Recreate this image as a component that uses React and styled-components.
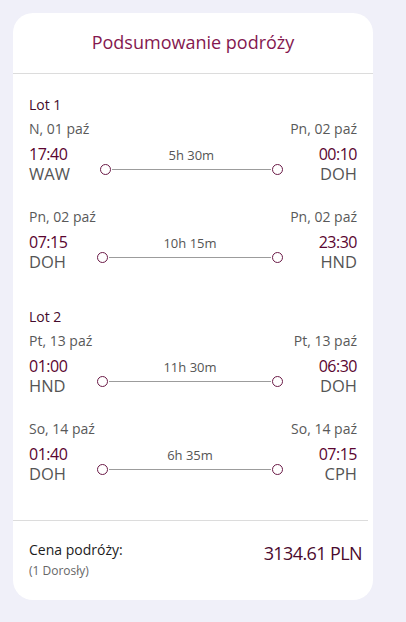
import React from 'react';
import styled, { createGlobalStyle } from 'styled-components';

const trips = [
    {
        title: 'Lot 1',
        legs: [
            { fromDate: 'N, 01 paź', toDate: 'Pn, 02 paź', dep: '17:40', arr: '00:10', from: 'WAW', to: 'DOH', time: '5h 30m' },
            { fromDate: 'Pn, 02 paź', toDate: 'Pn, 02 paź', dep: '07:15', arr: '23:30', from: 'DOH', to: 'HND', time: '10h 15m' },
        ],
    },
    {
        title: 'Lot 2',
        legs: [
            { fromDate: 'Pt, 13 paź', toDate: 'Pt, 13 paź', dep: '01:00', arr: '06:30', from: 'HND', to: 'DOH', time: '11h 30m' },
            { fromDate: 'So, 14 paź', toDate: 'So, 14 paź', dep: '01:40', arr: '07:15', from: 'DOH', to: 'CPH', time: '6h 35m' },
        ],
    },
];

const App = () => {
    return (
        <Page>
            <GlobalStyle />
            <Card>
                <Header>
                    <Title>Podsumowanie podróży</Title>
                </Header>
                <Body>
                    {trips.map((trip) => (
                        <Trip key={trip.title}>
                            <TripTitle>{trip.title}</TripTitle>
                            {trip.legs.map((leg) => (
                                <Leg key={leg.from + leg.to}>
                                    <Dates>
                                        <span>{leg.fromDate}</span>
                                        <span>{leg.toDate}</span>
                                    </Dates>
                                    <LegRow>
                                        <Stop>
                                            <Hour>{leg.dep}</Hour>
                                            <Code>{leg.from}</Code>
                                        </Stop>
                                        <Timeline>
                                            <Duration>{leg.time}</Duration>
                                            <Track>
                                                <Dot />
                                                <Rule />
                                                <Dot />
                                            </Track>
                                        </Timeline>
                                        <Stop $right>
                                            <Hour>{leg.arr}</Hour>
                                            <Code>{leg.to}</Code>
                                        </Stop>
                                    </LegRow>
                                </Leg>
                            ))}
                        </Trip>
                    ))}
                </Body>
                <Summary>
                    <div>
                        <PriceLabel>Cena podróży:</PriceLabel>
                        <Passengers>(1 Dorosły)</Passengers>
                    </div>
                    <Price>3134.61 PLN</Price>
                </Summary>
            </Card>
        </Page>
    );
}

const GlobalStyle = createGlobalStyle`
body {
    margin: 0;
    background: #f0f0f9;
    font-family: "Open Sans", "Noto Sans", sans-serif;
}
`
const Page = styled.div`
padding: 13px 33px 21px 13px;
min-height: 622px;
box-sizing: border-box;
`
const Card = styled.div`
background: #fff;
border-radius: 20px;
`
const Header = styled.div`
padding: 17px 0 19px;
border-bottom: 1px solid #dcdcdc;
text-align: center;
`
const Title = styled.h2`
margin: 0;
font-size: 18px;
line-height: 24px;
font-weight: 400;
color: #84184f;
`
const Body = styled.div`
padding: 21px 16px 36px;
display: flex;
flex-direction: column;
gap: 35px;
`
const Trip = styled.div`
display: flex;
flex-direction: column;
`
const TripTitle = styled.div`
font-size: 14px;
line-height: 20px;
color: #440b2c;
margin-bottom: 4px;
`
const Leg = styled.div`
& + & {
    margin-top: 23px;
}
`
const Dates = styled.div`
display: flex;
justify-content: space-between;
font-size: 14px;
line-height: 20px;
color: #595959;
margin-bottom: 5px;
`
const LegRow = styled.div`
display: flex;
align-items: flex-start;
`
const Stop = styled.div`
display: flex;
flex-direction: column;
text-align: ${(p) => (p.$right ? 'right' : 'left')};
`
const Hour = styled.div`
font-size: 16px;
line-height: 20px;
letter-spacing: -0.5px;
color: #5a0530;
`
const Code = styled.div`
font-size: 16.5px;
line-height: 20px;
color: #555;
`
const Timeline = styled.div`
flex: 1;
margin: 3px 36px 0 30px;
display: flex;
flex-direction: column;
align-items: center;
`
const Duration = styled.div`
font-size: 13px;
line-height: 16px;
color: #555;
`
const Track = styled.div`
align-self: stretch;
display: flex;
align-items: center;
height: 12px;
`
const Dot = styled.span`
width: 9px;
height: 9px;
border: 1.5px solid #6a1a46;
border-radius: 50%;
flex-shrink: 0;
`
const Rule = styled.span`
flex: 1;
height: 1px;
background: #9c9c9c;
margin: 0 1px;
`
const Summary = styled.div`
margin-right: 5px;
border-top: 1px solid #dcdcdc;
padding: 19px 6px 21px 16px;
display: flex;
justify-content: space-between;
align-items: flex-start;
`
const PriceLabel = styled.div`
font-size: 14px;
line-height: 20px;
color: #1c1c1c;
`
const Passengers = styled.div`
margin-top: 3px;
font-size: 12px;
line-height: 16px;
color: #666;
`
const Price = styled.div`
font-size: 18px;
line-height: 22px;
letter-spacing: -0.6px;
color: #4a0a2e;
margin-top: 2px;
`

export default App;
